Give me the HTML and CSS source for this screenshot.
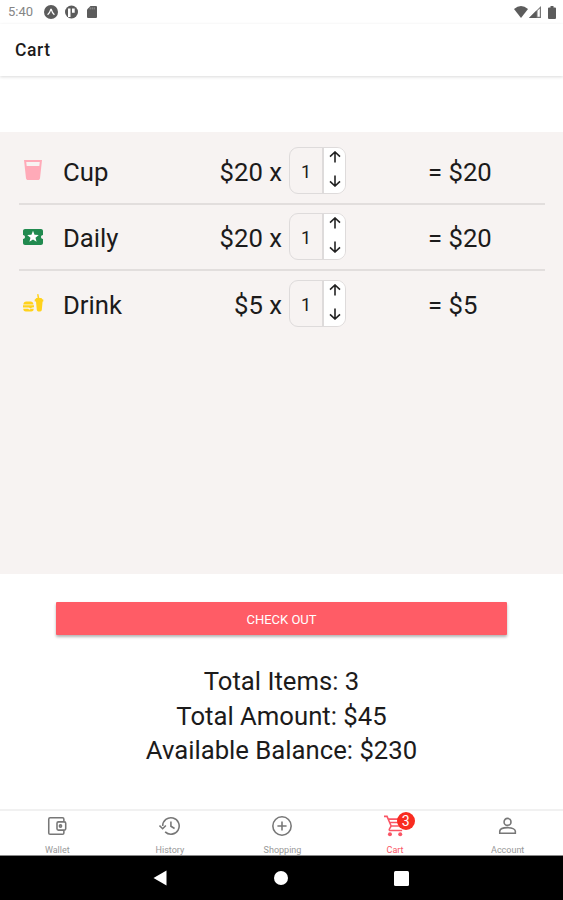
FILE: index.html
```html
<!DOCTYPE html>
<html lang="en">
<head>
<meta charset="utf-8">
<title>Cart</title>
<link rel="stylesheet" href="styles.css">
</head>
<body>
<div class="status">
  <span class="time">5:40</span>
  <svg class="s1" width="14" height="14" viewBox="0 0 14 14"><circle cx="7" cy="7" r="7" fill="#5c5c5c"/><path d="M3.600 9.800Q5.800 8 6.800 4.400h.5Q8.200 8 10.400 9.800" fill="none" stroke="#fff" stroke-width="1.300"/></svg>
  <svg class="s2" width="13" height="14" viewBox="0 0 13 14"><circle cx="6.500" cy="7" r="6.500" fill="#5c5c5c"/><path d="M3 3.500v8.500h2.500V3.500zM7 3.500h2.700v4.300H7z" fill="#fff"/></svg>
  <svg class="s3" width="10" height="12" viewBox="0 0 10 12"><path d="M3.500 0H9q1 0 1 1v10q0 1-1 1H1q-1 0-1-1V3.500z" fill="#5c5c5c"/><path d="M3.200 1.400v2M5.200 1.400v2M7.200 1.400v2" stroke="#999"/></svg>
  <span class="spacer"></span>
  <svg width="14" height="12" viewBox="0 0 14 12"><path d="M0 3Q7-3 14 3L7 12z" fill="#5c5c5c"/></svg>
  <svg class="signal" width="12" height="12" viewBox="0 0 12 12"><path d="M0 12 12 0v12z" fill="#777"/><path d="M0 12 7.500 4.500V12z" fill="#5c5c5c"/><path d="M8.500 4.800 10.800 2.500v8.300H8.500z" fill="#fff"/></svg>
  <svg class="batt" width="8" height="13" viewBox="0 0 8 13"><path d="M2.500 0h3v1.500H7q1 0 1 1V12q0 1-1 1H1q-1 0-1-1V2.500q0-1 1-1h1.500z" fill="#5c5c5c"/></svg>
</div>
<header class="header">Cart</header>
<main class="list">
  <div class="row">
    <svg class="icon" viewBox="0 0 24 24"><path fill="#ffaab8" d="M18.320 8H5.670L5.230 4H18.770M3 2L5 20.230C5.130 21.230 5.970 22 7 22H17C18 22 18.870 21.230 19 20.230L21 2H3Z"/></svg>
    <span class="name">Cup</span><span class="price">$20 x</span>
    <div class="stepper"><span class="qty">1</span><div class="arrows">
      <svg viewBox="0 0 12 12"><path d="M6 11.500V1.200M1 5.700l5-4.700 5 4.700"/></svg>
      <svg viewBox="0 0 12 12"><path d="M6 .5v10.300M1 6.300l5 4.700 5-4.700"/></svg></div></div>
    <span class="sum">= $20</span>
  </div>
  <div class="row">
    <svg class="icon" viewBox="0 0 24 24"><path fill="#218a4f" d="M20 12c0-1.100.9-2 2-2V6c0-1.100-.9-2-2-2H4c-1.100 0-1.990.9-1.990 2v4c1.100 0 1.990.9 1.990 2s-.89 2-2 2v4c0 1.100.9 2 2 2h16c1.100 0 2-.9 2-2v-4c-1.100 0-2-.9-2-2z"/><path fill="#fff" d="M15.580 16.800 12 14.500l-3.580 2.300 1.080-4.120-3.290-2.690 4.240-.25L12 5.800l1.540 3.950 4.240.25-3.290 2.690z"/></svg>
    <span class="name">Daily</span><span class="price">$20 x</span>
    <div class="stepper"><span class="qty">1</span><div class="arrows">
      <svg viewBox="0 0 12 12"><path d="M6 11.500V1.200M1 5.700l5-4.700 5 4.700"/></svg>
      <svg viewBox="0 0 12 12"><path d="M6 .5v10.300M1 6.300l5 4.700 5-4.700"/></svg></div></div>
    <span class="sum">= $20</span>
  </div>
  <div class="row">
    <svg class="icon" viewBox="0 0 24 24"><path fill="#ffd21c" d="M2.300 13.500Q2.600 10.500 5.300 10.500h4.200q2.700 0 3 3zM2 14.300h11v2l-2 .2-1.500 1-1.500-1H2zM2.300 17.800H7l1.500 1 1.500-1h2.700q0 2.700-2.500 2.700h-5.400Q2.300 20.500 2.300 17.800zM14 8.500l1.400-1.500h1.200l-.5-3.700 1.300-.3.900 4h2l1.400 1.500h.6v2h-.7l-.8 8.600q-.2 1.400-1.500 1.400h-2q-1.300 0-1.500-1.400L15 10.500h-1.300v-2z"/></svg>
    <span class="name">Drink</span><span class="price">$5 x</span>
    <div class="stepper"><span class="qty">1</span><div class="arrows">
      <svg viewBox="0 0 12 12"><path d="M6 11.500V1.200M1 5.700l5-4.700 5 4.700"/></svg>
      <svg viewBox="0 0 12 12"><path d="M6 .5v10.300M1 6.300l5 4.700 5-4.700"/></svg></div></div>
    <span class="sum">= $5</span>
  </div>
</main>
<section class="summary">
  <button class="checkout">CHECK OUT</button>
  <div class="totals"><div>Total Items: 3</div><div>Total Amount: $45</div><div>Available Balance: $230</div></div>
</section>
<nav class="tabs">
  <div class="tab"><svg viewBox="0 0 24 24"><path d="M19.500 7V4.500q0-1.500-1.500-1.500H4.500Q3 3 3 4.500v15Q3 21 4.500 21H18q1.500 0 1.500-1.500V17M13.500 7.500H20q1.500 0 1.500 1.500v6q0 1.500-1.500 1.500h-6.500Q12 16.500 12 15V9q0-1.500 1.500-1.500z"/><circle cx="15.800" cy="12" r="1.200"/></svg><span>Wallet</span></div>
  <div class="tab"><svg viewBox="0 0 24 24"><path d="M4 12a9 9 0 1 1 2.700 6.400M.5 11.500 4 15l3.500-3.500M13 7v5.300l4 2.400"/></svg><span>History</span></div>
  <div class="tab"><svg viewBox="0 0 24 24"><circle cx="12" cy="12" r="10"/><path d="M12 7v10M7 12h10"/></svg><span>Shopping</span></div>
  <div class="tab active"><svg viewBox="0 0 24 24"><path d="M0 1.500h3.300l4.500 10.500h9L21 4.500H5M5.800 8.200h13M7.800 12 5.800 15.500q-.3 1.500 1 1.500h13"/><g class="wheels"><circle cx="6.500" cy="21" r="2.200"/><circle cx="17.700" cy="21" r="2.200"/></g></svg><b class="badge">3</b><span>Cart</span></div>
  <div class="tab"><svg viewBox="0 0 24 24"><circle cx="11.500" cy="7.500" r="3.800"/><path d="M3 20v-2.500q.5-3.500 8.500-3.700 8 .2 8.500 3.700V20z"/></svg><span>Account</span></div>
</nav>
<footer class="sysnav">
  <svg width="14" height="16" viewBox="0 0 14 16"><path d="M.5 8 13.500.5v15z" fill="#fff"/></svg>
  <svg width="14" height="14" viewBox="0 0 14 14"><circle cx="7" cy="7" r="7" fill="#fff"/></svg>
  <svg width="15" height="15" viewBox="0 0 15 15"><rect width="15" height="15" rx="1.500" fill="#fff"/></svg>
</footer>
</body>
</html>
```
FILE: styles.css
```css
* { box-sizing: border-box; }
body { margin: 0; width: 563px; height: 900px; display: flex; flex-direction: column; overflow: hidden; background: #fff; color: #1c1b1b; font-family: Roboto, "Liberation Sans", sans-serif; }
svg { display: block; flex: none; }
.status { height: 24px; padding: 0 7px 0 8px; display: flex; align-items: center; }
.time { font-size: 13px; color: #858585; width: 36px; line-height: 24px; }
.s2 { margin-left: 7px; }
.s3 { margin-left: 9px; }
.spacer { flex: 1; }
.signal { margin-left: 1px; }
.batt { margin-left: 7px; }
.header { height: 52px; padding-left: 15px; line-height: 52px; font-size: 17.500px; letter-spacing: .6px; font-weight: 500; box-shadow: 0 1px 3px rgba(0, 0, 0, .15); }
.list { height: 442px; margin-top: 56px; padding: 6px 18px 0 19px; background: #f7f3f2; }
.row { height: 66.500px; display: grid; grid-template-columns: 45px 118px 100px 7px 57px 82px 1fr; align-items: center; font-size: 25.700px; border-bottom: 2px solid #e2dedd; }
.row:last-child { border-bottom-color: transparent; }
.icon { width: 24px; height: 24px; margin-left: 2px; }
.name, .price, .sum { padding-top: 3px; }
.name { margin-left: -1px; }
.price { text-align: right; }
.stepper { grid-column: 5; width: 57px; height: 47px; display: flex; border: 1px solid #dedbdb; border-radius: 9px; overflow: hidden; }
.qty { width: 32px; font-size: 18px; line-height: 47px; text-align: center; }
.arrows { flex: 1; display: flex; flex-direction: column; align-items: center; justify-content: space-between; padding: 3px 0 6px; background: #fff; border-left: 2px solid #dedbdb; }
.arrows svg { width: 12px; height: 12px; fill: none; stroke: #222; stroke-width: 1.600; }
.sum { grid-column: 7; }
.summary { height: 235px; padding-top: 28px; display: flex; flex-direction: column; align-items: center; }
.checkout { width: 451px; height: 33px; padding: 2px 0 0; border: 0; border-radius: 1px; background: #ff5c66; color: #fff; font: 13px Roboto, sans-serif; box-shadow: 0 2px 3px rgba(0, 0, 0, .3); }
.totals { margin-top: 29px; font-size: 25.700px; line-height: 34.700px; text-align: center; }
.tabs { height: 47px; display: flex; border-top: 2px solid #f1f1f1; border-bottom: 1px solid #888; }
.tab { position: relative; flex: 1; display: flex; flex-direction: column; align-items: center; padding-left: 2px; padding-top: 4px; color: #777; }
.tab svg { width: 22px; height: 22px; fill: none; stroke: currentColor; stroke-width: 1.700; }
.tab span { margin-top: 7px; font-size: 9px; line-height: 12px; color: #999; }
.tab.active, .tab.active span { color: #fa5565; }
.tab .wheels { fill: currentColor; stroke: none; }
.badge { position: absolute; left: 59px; top: 1px; width: 18px; height: 18px; border-radius: 50%; background: #f92c20; color: #fff; font-size: 14px; font-weight: 400; line-height: 18px; text-align: center; }
.sysnav { height: 44px; padding-left: 153px; background: #000; display: flex; align-items: center; gap: 107px; }
.sysnav svg:last-child { margin-left: -1px; }
```
